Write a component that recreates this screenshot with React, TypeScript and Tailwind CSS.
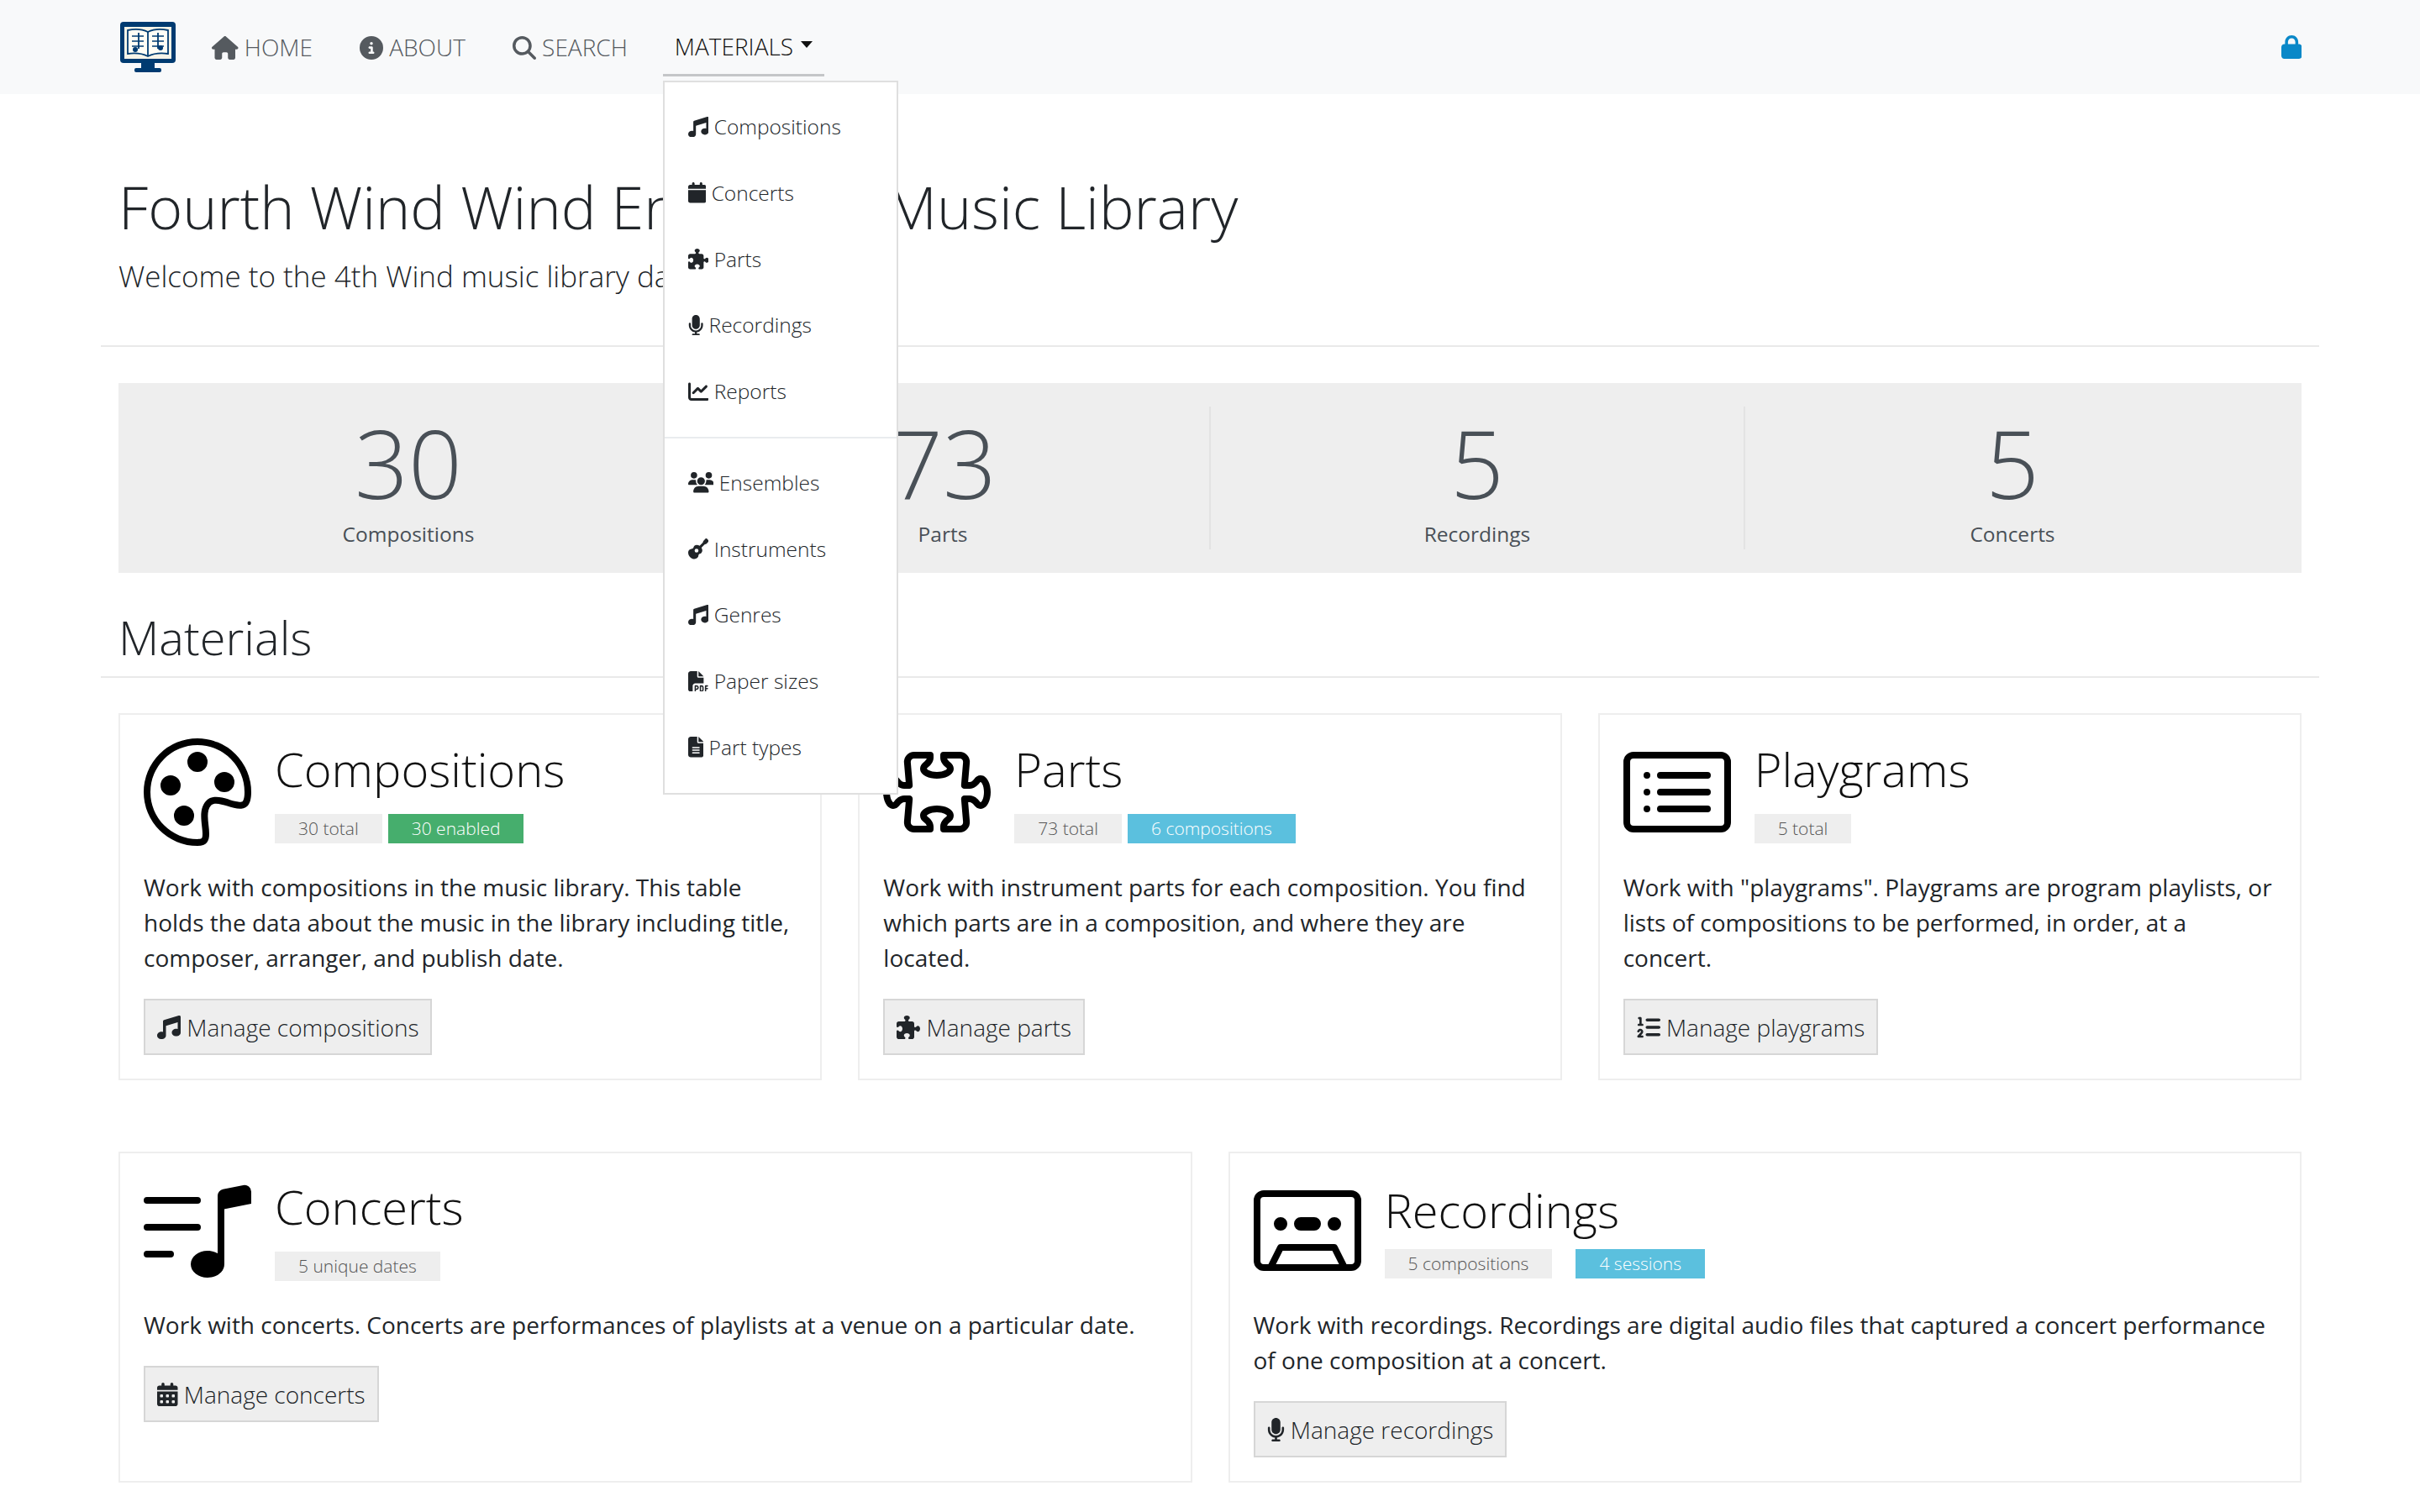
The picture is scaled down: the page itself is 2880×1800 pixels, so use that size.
import React from "react";
import {
  FaHouse, FaCircleInfo, FaMagnifyingGlass, FaLock, FaMusic, FaCalendar, FaPuzzlePiece, FaMicrophone,
  FaChartLine, FaUsers, FaGuitar, FaFilePdf, FaFileLines, FaListOl, FaCalendarDays,
} from "react-icons/fa6";
import { BsPalette, BsPuzzle, BsCardList, BsMusicNoteList, BsCassette } from "react-icons/bs";

const ic = "inline-block h-[1em] align-[-0.125em]";

function Logo() {
  return (
    <svg width="66" height="60" viewBox="0 0 66 60" className="shrink-0">
      <rect x="0" y="0" width="66" height="49" rx="4" fill="#003b71" />
      <rect x="25" y="48" width="16" height="8" fill="#003b71" />
      <rect x="17" y="55" width="32" height="5" rx="2" fill="#003b71" />
      <rect x="5" y="6" width="56" height="38" fill="#f7f4e8" />
      <path d="M9 10q14-3 24 2q10-5 24-2v28q-14-2-24 3q-10-5-24-3z" fill="#fffdf5" stroke="#003b71" strokeWidth="1.8" />
      <path d="M33 12v29" stroke="#003b71" strokeWidth="1.8" />
      <path d="M14 17h14M14 23h14M14 29h14M38 17h14M38 23h14M38 29h14" stroke="#003b71" strokeWidth="1.6" />
      <path d="M22 13v19M45 13v19" stroke="#003b71" strokeWidth="1.8" />
      <circle cx="18" cy="33" r="3" fill="#003b71" />
      <circle cx="48" cy="31" r="3" fill="#003b71" />
    </svg>
  );
}

function NavItem({ icon, label, className }: { icon: React.ReactNode; label: string; className: string }) {
  return (
    <a className={"text-[#555a5f] text-[28px] leading-[42px] whitespace-nowrap " + className}>
      {icon} {label}
    </a>
  );
}

function MenuItem({ icon, label }: { icon: React.ReactNode; label: string }) {
  return (
    <a className="block px-[28px] py-[21px] text-[24.5px] leading-[36.75px] text-[#212529] whitespace-nowrap">
      {icon} {label}
    </a>
  );
}

function Stat({ value, label, last }: { value: string; label: string; last?: boolean }) {
  return (
    <div className={"text-center " + (last ? "" : "border-r-2 border-[#e3e3e3]")}>
      <div className="text-[112px] leading-[134px] text-[#495057]">{value}</div>
      <div className="font-normal text-[24.5px] leading-[36.75px] text-[#495057]">{label}</div>
    </div>
  );
}

function Badge({ children, color, className }: { children: React.ReactNode; color?: string; className?: string }) {
  const c = color === "green" ? "bg-[#46ae6d] text-white" : color === "blue" ? "bg-[#5bc0de] text-white" : "bg-[#eeeeee] text-[#555555]";
  return <span className={"inline-block px-[28px] py-[7px] text-[21px] leading-[21px] whitespace-nowrap " + c + " " + (className || "")}>{children}</span>;
}

function Button({ icon, label }: { icon: React.ReactNode; label: string }) {
  return (
    <a className="inline-block border-2 border-[#d6d6d6] bg-[#eeeeee] px-[14px] py-[10.5px] text-[28px] leading-[42px] text-[#212529] whitespace-nowrap">
      {icon} {label}
    </a>
  );
}

function Card({ icon, title, badges, text, button, titleTop, badgeTop, headH }: {
  icon: React.ReactNode; title: string; badges: React.ReactNode; text: string; button: React.ReactNode; titleTop: string; badgeTop: string; headH: string;
}) {
  return (
    <div className="border-2 border-[#eeeeee] p-[28px] bg-white">
      <div className={"flex gap-[28px] items-start " + headH}>
        <div className="w-[128px] h-[128px] shrink-0 text-black">{icon}</div>
        <div className={titleTop}>
          <div className="text-[56px] leading-[67px] text-[#111111]">{title}</div>
          <div className={"flex " + badgeTop}>{badges}</div>
        </div>
      </div>
      <p className="font-normal text-[28px] leading-[42px] text-[#212529] mb-[28px]">{text}</p>
      {button}
    </div>
  );
}

const bigIcon = { size: 128 };

export default function App() {
  return (
    <div className="relative min-h-[1800px] bg-white font-['Open_Sans',sans-serif] font-light text-[#212529]">
      <header className="h-[112px] bg-[#f8f9fa]">
        <div className="h-full pl-[143px] pr-[141px] flex items-center">
          <Logo />
          <NavItem className="ml-[43px]" icon={<FaHouse className={ic + " w-[1.125em]"} />} label="HOME" />
          <NavItem className="ml-[56px]" icon={<FaCircleInfo className={ic + " w-[1em]"} />} label="ABOUT" />
          <NavItem className="ml-[56px]" icon={<FaMagnifyingGlass className={ic + " w-[1em]"} />} label="SEARCH" />
          <div className="relative ml-[42px] self-start mt-[21px]">
            <a className="flex items-center h-[70px] pl-[14px] pr-[14px] border-b-[3px] border-[#c4c6c8] text-[28px] text-[#111111] whitespace-nowrap">
              MATERIALS
              <span className="ml-[9px] mb-[4px] w-0 h-0 border-x-[7px] border-t-[8px] border-x-transparent border-t-[#111111]" />
            </a>
            <div className="absolute z-10 left-0 top-[75px] w-[280px] border-2 border-[#dfdfdf] bg-white py-[14px]">
              <MenuItem icon={<FaMusic className={ic + " w-[1em]"} />} label="Compositions" />
              <MenuItem icon={<FaCalendar className={ic + " w-[0.875em]"} />} label="Concerts" />
              <MenuItem icon={<FaPuzzlePiece className={ic + " w-[1em]"} />} label="Parts" />
              <MenuItem icon={<FaMicrophone className={ic + " w-[0.75em]"} />} label="Recordings" />
              <MenuItem icon={<FaChartLine className={ic + " w-[1em]"} />} label="Reports" />
              <div className="my-[14px] border-t-2 border-[#e9ecef]" />
              <MenuItem icon={<FaUsers className={ic + " w-[1.25em]"} />} label="Ensembles" />
              <MenuItem icon={<FaGuitar className={ic + " w-[1em]"} />} label="Instruments" />
              <MenuItem icon={<FaMusic className={ic + " w-[1em]"} />} label="Genres" />
              <MenuItem icon={<FaFilePdf className={ic + " w-[1em]"} />} label="Paper sizes" />
              <MenuItem icon={<FaFileLines className={ic + " w-[0.75em]"} />} label="Part types" />
            </div>
          </div>
          <FaLock className="ml-auto text-[#0a88c8] w-[24.5px] h-[28px]" />
        </div>
      </header>

      <main className="w-[2640px] mx-auto">
        <div className="px-[21px] pt-[92px]">
          <h1 className="text-[70px] leading-[84px] text-[#212529]">Fourth Wind Wind Ensemble Music Library</h1>
          <p className="mt-[15px] text-[35px] leading-[52.5px] text-[#212529]">Welcome to the 4th Wind music library database.</p>
        </div>
        <hr className="mt-[55px] border-t-2 border-[#e9e9e9]" />
        <div className="mx-[21px] mt-[43px] bg-[#eeeeee] pl-[28px] pr-[26px] py-[28px] grid grid-cols-4">
          <Stat value="30" label="Compositions" />
          <Stat value="73" label="Parts" />
          <Stat value="5" label="Recordings" />
          <Stat value="5" label="Concerts" last />
        </div>
        <h2 className="mx-[21px] mt-[43px] text-[56px] leading-[67px] text-[#212529]">Materials</h2>
        <hr className="mt-[13px] border-t-2 border-[#e9e9e9]" />

        <div className="mx-[21px] mt-[42px] grid grid-cols-3 gap-x-[43px]">
          <Card
            icon={<BsPalette {...bigIcon} />}
            title="Compositions"
            headH="h-[156px]"
            titleTop="mt-[3px]"
            badgeTop="mt-[20px] gap-[7px]"
            badges={<><Badge>30 total</Badge><Badge color="green">30 enabled</Badge></>}
            text="Work with compositions in the music library. This table holds the data about the music in the library including title, composer, arranger, and publish date."
            button={<Button icon={<FaMusic className={ic + " w-[1em]"} />} label="Manage compositions" />}
          />
          <Card
            icon={<BsPuzzle {...bigIcon} />}
            title="Parts"
            headH="h-[156px]"
            titleTop="mt-[3px]"
            badgeTop="mt-[20px] gap-[7px]"
            badges={<><Badge>73 total</Badge><Badge color="blue">6 compositions</Badge></>}
            text="Work with instrument parts for each composition. You find which parts are in a composition, and where they are located."
            button={<Button icon={<FaPuzzlePiece className={ic + " w-[1em]"} />} label="Manage parts" />}
          />
          <Card
            icon={<BsCardList {...bigIcon} />}
            title="Playgrams"
            headH="h-[156px]"
            titleTop="mt-[3px]"
            badgeTop="mt-[20px] gap-[7px]"
            badges={<Badge>5 total</Badge>}
            text={'Work with "playgrams". Playgrams are program playlists, or lists of compositions to be performed, in order, at a concert.'}
            button={<Button icon={<FaListOl className={ic + " w-[1em]"} />} label="Manage playgrams" />}
          />
        </div>

        <div className="mx-[21px] mt-[85px] grid grid-cols-2 gap-x-[43px]">
          <Card
            icon={<BsMusicNoteList {...bigIcon} />}
            title="Concerts"
            headH="h-[155px]"
            titleTop="mt-[2px]"
            badgeTop="mt-[20px]"
            badges={<Badge>5 unique dates</Badge>}
            text="Work with concerts. Concerts are performances of playlists at a venue on a particular date."
            button={<Button icon={<FaCalendarDays className={ic + " w-[0.875em]"} />} label="Manage concerts" />}
          />
          <Card
            icon={<BsCassette {...bigIcon} />}
            title="Recordings"
            headH="h-[155px]"
            titleTop="mt-[6px]"
            badgeTop="mt-[13px] gap-[28px]"
            badges={<><Badge>5 compositions</Badge><Badge color="blue">4 sessions</Badge></>}
            text="Work with recordings. Recordings are digital audio files that captured a concert performance of one composition at a concert."
            button={<Button icon={<FaMicrophone className={ic + " w-[0.75em]"} />} label="Manage recordings" />}
          />
        </div>
      </main>
    </div>
  );
}
